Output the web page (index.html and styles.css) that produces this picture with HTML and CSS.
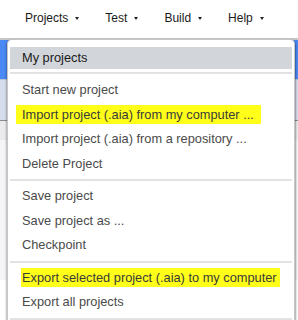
FILE: index.html
```html
<!DOCTYPE html>
<html lang="en">
<head>
  <meta charset="UTF-8">
  <title>Projects menu</title>
  <link rel="stylesheet" href="styles.css">
</head>
<body>
  <div class="topbar">
    <span class="topmenu">Projects<i class="caret"></i></span>
    <span class="topmenu">Test<i class="caret"></i></span>
    <span class="topmenu">Build<i class="caret"></i></span>
    <span class="topmenu">Help<i class="caret"></i></span>
  </div>

  <!-- page behind the open menu -->
  <div class="workspace">
    <div class="ws-rule"></div>
    <div class="ws-toolbar"></div>
    <div class="ws-header"></div>
    <div class="ws-row"></div>
    <div class="ws-body"></div>
  </div>

  <!-- open dropdown -->
  <div class="dropdown">
    <div class="item selected">My projects</div>
    <div class="sep first"></div>
    <div class="item">Start new project</div>
    <div class="item"><span class="mark mark-import">Import project (.aia) from my computer ...</span></div>
    <div class="item">Import project (.aia) from a repository ...</div>
    <div class="item">Delete Project</div>
    <div class="sep"></div>
    <div class="item">Save project</div>
    <div class="item">Save project as ...</div>
    <div class="item">Checkpoint</div>
    <div class="sep"></div>
    <div class="item"><span class="mark mark-export">Export selected project (.aia) to my computer</span></div>
    <div class="item">Export all projects</div>
    <div class="sep"></div>
  </div>
</body>
</html>
```

FILE: styles.css
```css
body {
  margin: 0;
  background: #ffffff;
  font-family: "Liberation Sans", Arial, sans-serif;
  color: #222;
  height: 320px;
  overflow: hidden;
  position: relative;
}
.topbar {
  height: 38px;
  display: flex;
  align-items: center;
  padding-left: 25px;
  gap: 26px;
  font-size: 12px;
  color: #1a1a1a;
  padding-bottom: 2px;
  box-sizing: border-box;
}
.topmenu {
  display: flex;
  align-items: center;
}
.caret {
  width: 0;
  height: 0;
  margin-left: 7px;
  border-left: 2.5px solid transparent;
  border-right: 2.5px solid transparent;
  border-top: 3px solid #222;
}
.workspace {
  display: flex;
  flex-direction: column;
}
.ws-rule {
  height: 2px;
  background: #c8c8c8;
}
.ws-toolbar {
  height: 39px;
  background: #4a89f3;
  border-bottom: 1px solid #b9c3d3;
}
.ws-header {
  height: 40px;
  background: #d7deeb;
  border-bottom: 1px solid #8c8c8c;
}
.ws-row {
  height: 19px;
  background: #ebebee;
}
.ws-body {
  height: 140px;
  background: #f5f5f7;
}
.dropdown {
  position: absolute;
  top: 39px;
  left: 7px;
  width: 288px;
  height: 281px;
  box-sizing: border-box;
  padding: 7px 2px 0;
  background: #ffffff;
  border: 1px solid #c6c6c6;
  border-bottom: none;
  border-radius: 5px 5px 0 0;
  box-shadow: -1px 1px 2px rgba(0, 0, 0, 0.25), 1px 1px 2px rgba(0, 0, 0, 0.35);
  font-size: 12.8px;
  color: #4a4a4a;
  overflow: hidden;
}
.item {
  height: 24.5px;
  line-height: 24.5px;
  padding-left: 12px;
  white-space: nowrap;
}
.item.selected {
  height: 22px;
  line-height: 22px;
  background: #d2d5d9;
  color: #1a1a1a;
}
.sep {
  height: 2px;
  margin: 3px 0;
  background: #e2e2e2;
}
.sep.first {
  margin: 3px 0 4px;
}
.mark {
  display: inline-block;
  background: #ffff1a;
  line-height: 19px;
  color: #3a3a3a;
}
.mark-import {
  margin-left: -6px;
  padding: 0 7px 0 6px;
}
.mark-export {
  margin-left: -1px;
  padding: 0 3px 0 1px;
}
```
